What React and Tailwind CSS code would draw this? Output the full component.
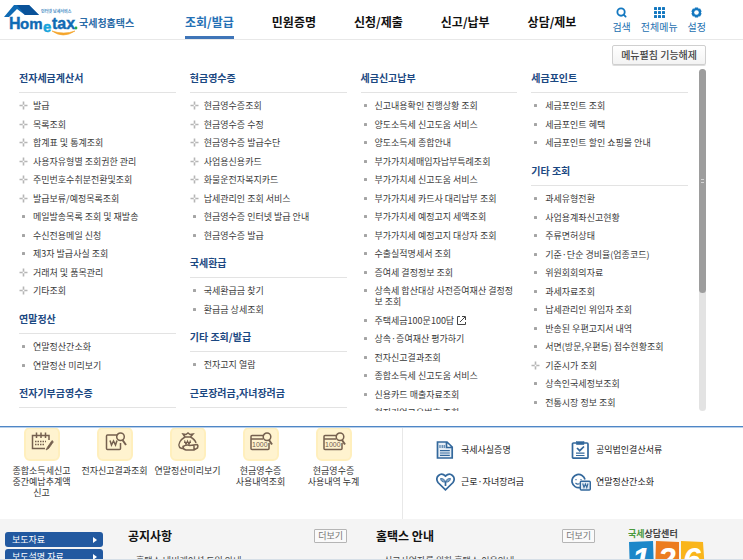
import { Search } from "lucide-react"

const NAV = ["조회/발급", "민원증명", "신청/제출", "신고/납부", "상담/제보"]

// items starting with "+" have a submenu
const COLUMNS = [
    [
        {
            title: "전자세금계산서",
            items: ["+발급", "+목록조회", "+합계표 및 통계조회", "+사용자유형별 조회권한 관리", "+주민번호수취분전환및조회", "+발급보류/예정목록조회", "메일발송목록 조회 및 재발송", "수신전용메일 신청", "제3자 발급사실 조회", "+거래처 및 품목관리", "+기타조회"],
        },
        { title: "연말정산", items: ["연말정산간소화", "연말정산 미리보기"] },
        { title: "전자기부금영수증", items: [] },
    ],
    [
        {
            title: "현금영수증",
            items: ["+현금영수증조회", "+현금영수증 수정", "+현금영수증 발급수단", "+사업용신용카드", "+화물운전자복지카드", "+납세관리인 조회 서비스", "현금영수증 인터넷 발급 안내", "현금영수증 발급"],
        },
        { title: "국세환급", items: ["국세환급금 찾기", "환급금 상세조회"] },
        { title: "기타 조회/발급", items: ["전자고지 열람"] },
        { title: "근로장려금,자녀장려금", items: [] },
    ],
    [
        {
            title: "세금신고납부",
            items: ["신고내용확인 진행상황 조회", "양도소득세 신고도움 서비스", "양도소득세 종합안내", "부가가치세매입자납부특례조회", "부가가치세 신고도움 서비스", "부가가치세 카드사 대리납부 조회", "부가가치세 예정고지 세액조회", "부가가치세 예정고지 대상자 조회", "수출실적명세서 조회", "증여세 결정정보 조회", "상속세 합산대상 사전증여재산 결정정보 조회", "주택세금100문100답", "상속·증여재산 평가하기", "전자신고결과조회", "종합소득세 신고도움 서비스", "신용카드 매출자료조회", "현지기업고유번호 조회"],
        },
    ],
    [
        { title: "세금포인트", items: ["세금포인트 조회", "세금포인트 혜택", "세금포인트 할인 쇼핑몰 안내"] },
        {
            title: "기타 조회",
            items: ["과세유형전환", "사업용계좌신고현황", "주류면허상태", "기준·단순 경비율(업종코드)", "위원회회의자료", "과세자료조회", "납세관리인 위임자 조회", "반송된 우편고지서 내역", "서면(방문,우편등) 접수현황조회", "+기준시가 조회", "상속인국세정보조회", "전통시장 정보 조회"],
        },
    ],
]

const QUICK = [
    { icon: "calendar", lines: ["종합소득세신고", "중간예납추계액", "신고"] },
    { icon: "result", lines: ["전자신고결과조회"] },
    { icon: "bag", lines: ["연말정산미리보기"] },
    { icon: "cash", lines: ["현금영수증", "사용내역조회"] },
    { icon: "cash", lines: ["현금영수증", "사용내역 누계"] },
]

const SERVICES = [
    { icon: "document", label: "국세사실증명" },
    { icon: "clipboard", label: "공익법인결산서류" },
    { icon: "heart", label: "근로·자녀장려금" },
    { icon: "face", label: "연말정산간소화" },
]

function Logo() {
    return (
        <svg width="131" height="34" viewBox="0 0 131 34" role="img" aria-label="Hometax 국세청홈택스" className="shrink-0">
            <path d="M0 13L10 1H25L35 11H21L13 5L5 13Z" fill="#0f6ab4" />
            <path d="M13 1H25L35 11H21Z" fill="#0a5299" />
            <g fontFamily="Liberation Sans, sans-serif" fontWeight="bold" fill="#0f6ab4" stroke="#0f6ab4" strokeWidth="0.4">
                <text x="5" y="25" fontSize="16">H</text>
                <text x="16" y="25" fontSize="15">om</text>
                <text x="39" y="28" fontSize="15" fill="#16a5dc" stroke="#16a5dc">e</text>
                <text x="48" y="25" fontSize="16">tax</text>
            </g>
            <path d="M48 27Q59 35 71 27Q60 31 48 27Z" fill="#f5a52a" stroke="#f5a52a" strokeWidth="0.6" />
            <circle cx="72" cy="24" r="1.4" fill="#2aa84a" />
            <g fontFamily="Noto Sans CJK KR, sans-serif" fontWeight="bold">
                <text x="37" y="9" fontSize="4" fill="#4d8fc6">인터넷 납세서비스</text>
                <text x="75" y="23" fontSize="10" fill="#2b6ca8">국세청홈택스</text>
            </g>
        </svg>
    )
}

function GridIcon() {
    return (
        <svg width="11" height="11" viewBox="0 0 11 11" fill="#1478c0" aria-hidden="true">
            {[0, 4, 8].map((y) => [0, 4, 8].map((x) => <rect key={`${x}-${y}`} x={x} y={y} width="3" height="3" rx="0.5" />))}
        </svg>
    )
}

function GearIcon() {
    return (
        <svg width="11" height="11" viewBox="0 0 11 11" aria-hidden="true">
            <path d="M4 0.5h3l0.6 1.2 1.5-0.1 1.5 2.6-0.7 1.3 0.7 1.3-1.5 2.6-1.5-0.1L7 10.5H4l-0.6-1.2-1.5 0.1L0.4 6.8l0.7-1.3-0.7-1.3 1.5-2.6 1.5 0.1z" fill="#1478c0" />
            <circle cx="5.5" cy="5.5" r="2.3" fill="#fff" />
        </svg>
    )
}

function Header() {
    return (
        <header className="flex justify-between border-b border-[#e8e8e8] pl-1 pr-[37px]">
            <div className="flex">
                <a href="#home" className="pt-1">
                    <Logo />
                </a>
                <nav className="ml-[50px] flex gap-[38px]">
                    {NAV.map((label, i) => (
                        <a
                            key={label}
                            href="#menu"
                            className={`h-[39px] whitespace-nowrap border-b-3 pt-[13px] text-[12px] leading-[18px] font-bold ${i === 0 ? "border-[#3f75b8] text-[#2470b5]" : "border-transparent text-[#111]"}`}
                        >
                            {label}
                        </a>
                    ))}
                </nav>
            </div>
            <div className="flex gap-[10px] whitespace-nowrap pt-[7px] text-[10px] leading-[14px] text-[#1d6fb0]">
                <button className="flex flex-col items-center gap-[2px]">
                    <Search size={11} strokeWidth={4} color="#1478c0" />
                    검색
                </button>
                <button className="flex flex-col items-center gap-[2px]">
                    <GridIcon />
                    전체메뉴
                </button>
                <button className="flex flex-col items-center gap-[2px]">
                    <GearIcon />
                    설정
                </button>
            </div>
        </header>
    )
}

function Marker({ plus }) {
    return (
        <svg width="9" height="9" viewBox="0 0 9 9" className="mt-px mr-[5px] shrink-0" aria-hidden="true">
            {plus ? (
                <g>
                    <path d="M0.5 4.5H8.5M4.5 0.5V8.5" stroke="#b5b5b5" strokeWidth="1.6" />
                    <rect x="3.7" y="3.7" width="1.6" height="1.6" fill="#fff" />
                </g>
            ) : (
                <rect x="3" y="3" width="3" height="3" rx="0.5" fill="#a5a5a5" />
            )}
        </svg>
    )
}

function NewWindowIcon() {
    return (
        <svg width="11" height="11" viewBox="0 0 11 11" fill="none" stroke="#444" className="ml-[2px]" aria-hidden="true">
            <path d="M4 1.5H1.5V9.5H9.5V7M4 7L9 2M6 1.5H9.5V5" />
        </svg>
    )
}

function MenuSection({ title, items }) {
    return (
        <section>
            <h2 className="border-b border-[#e3e3e3] pb-[6px] text-[10px] leading-4 font-bold text-[#1b4882]">{title}</h2>
            <ul className="pt-[3px]">
                {items.map((item) => (
                    <li key={item} className="pt-1 pb-1 text-[9px] leading-[11px] text-[#3a3a3a] even:pb-[3px]">
                        <a href="#item" className="flex">
                            <Marker plus={item.startsWith("+")} />
                            <span>{item.replace("+", "")}</span>
                            {item.startsWith("주택세금") && <NewWindowIcon />}
                        </a>
                    </li>
                ))}
            </ul>
        </section>
    )
}

function MegaMenu() {
    return (
        <div className="z-10 border-b border-[#4f86c6] bg-white pt-[5px] pr-[37px] pb-[15px] pl-[19px] shadow-[0_1px_0_#b9d0ea]">
            <div className="flex justify-end">
                <button className="h-5 rounded-[2px] border border-[#cfcfcf] bg-linear-to-b from-white to-[#f3f3f3] px-2 text-[10px] leading-4 font-medium text-[#444] shadow-[0_1px_0_#ddd]">
                    메뉴펼침 기능해제
                </button>
            </div>
            <div className="mt-1 flex h-[342px] gap-[11px] overflow-hidden">
                <div className="grid flex-1 grid-cols-4 gap-x-[14px] pt-px">
                    {COLUMNS.map((sections) => (
                        <div key={sections[0].title} className="flex flex-col gap-[11px]">
                            {sections.map((s) => (
                                <MenuSection key={s.title} {...s} />
                            ))}
                        </div>
                    ))}
                </div>
                <div className="w-[7px] rounded-full bg-[#e3e3e3]">
                    <div className="flex h-56 items-center justify-center rounded-full bg-[#9d9d9d]">
                        <span className="h-1 w-[3px] border-y border-[#d5d5d5]" />
                    </div>
                </div>
            </div>
        </div>
    )
}

function QuickIcon({ name }) {
    return (
        <svg width="24" height="20" viewBox="0 0 24 20" fill="none" stroke="#75604f" strokeWidth="1.5" aria-hidden="true">
            {name === "calendar" && (
                <g>
                    <path d="M19 8V3.5H2.5V16.5H15M6.5 0.5V6M11 0.5V6M15.5 0.5V6" />
                    <path d="M5 9.5H16M5 12.5H14" strokeDasharray="1.5 1" />
                    <path d="M22 8.5L17.5 15L16 18L18.8 16.4L23.4 9.8Z" fill="#75604f" strokeWidth="0.7" />
                </g>
            )}
            {name === "result" && (
                <g>
                    <path d="M14 3H4.5Q3.5 3 3.5 4V16.5Q3.5 17.5 4.5 17.5H16.5Q17.5 17.5 17.5 16.5V11" />
                    <circle cx="17.5" cy="4.8" r="3.8" fill="#fff3cf" />
                    <path d="M19.5 8L23 13" strokeWidth="2" />
                    <path d="M7 8.5L8.5 13L10.5 9L12.5 13L14 8.5" strokeWidth="1.5" />
                </g>
            )}
            {name === "bag" && (
                <g>
                    <path d="M9 5L7 2L10 2.5L12 1L14 2.5L17 2L14.5 5ZM9 5C4 8 2 12 3.5 15Q4 16.5 8 16.5M14.5 5C18 7 19.5 9 20 11" />
                    <path d="M8.5 8.5L10 12.5L11.5 9L13 12.5L14.5 8.5M8 10.5H15" strokeWidth="1.2" />
                    <path d="M7 14.5Q11 12 14 13.5L21 12.5Q22.5 13 21.5 16L18 18H10Q7 17.5 7 14.5ZM18 13V18" />
                </g>
            )}
            {name === "cash" && (
                <g>
                    <path d="M14 3.5H3Q2 3.5 2 4.5V16.5Q2 17.5 3 17.5H19Q20 17.5 20 16.5V11M2 7H14" />
                    <text x="3" y="15" fontSize="7" fontFamily="Liberation Sans, sans-serif" fill="#75604f" stroke="none">1000</text>
                    <circle cx="18" cy="4.8" r="3.8" fill="#fff3cf" />
                    <path d="M20 8L23 12.5" strokeWidth="2" />
                </g>
            )}
        </svg>
    )
}

function ServiceIcon({ name }) {
    return (
        <svg width="20" height="18" viewBox="0 0 20 18" fill="none" stroke="#33689c" strokeWidth="1.7" aria-hidden="true">
            {name === "document" && (
                <g>
                    <path d="M1.5 1H11L16.2 6V17H1.5ZM10.5 1.5V6.5H16" fill="#e6eef6" />
                    <path d="M4 4V7M6.2 4V7M8.2 4V7" strokeWidth="1" />
                    <path d="M4 9.7H13.8M4 12H13.8M4 14.3H13.8" strokeWidth="1.2" />
                </g>
            )}
            {name === "clipboard" && (
                <g>
                    <rect x="1.5" y="2" width="15.5" height="15.2" rx="1" />
                    <rect x="5.5" y="0.6" width="7.5" height="3" fill="#33689c" strokeWidth="0.5" />
                    <path d="M6 7L8.7 9.7L13 5.5" />
                    <path d="M5 12.2H13.5M5 14.5H13.5" strokeWidth="1.2" />
                </g>
            )}
            {name === "heart" && (
                <g>
                    <path d="M9.5 16.8L2 9.5C-1.5 4 4.5-1.5 9.5 3C14.5-1.5 20.5 4 17 9.5Z" />
                    <path d="M9.5 13V8.5" />
                    <path d="M9.3 9Q5 9.5 4.5 5.5Q8.5 5 9.3 9ZM9.7 9Q14 9.5 14.5 5.5Q10.5 5 9.7 9Z" fill="#7ba0c4" strokeWidth="0.8" />
                </g>
            )}
            {name === "face" && (
                <g>
                    <path d="M9 14.5A6.6 6.6 0 1 1 14 6.5" />
                    <path d="M5 6V7.2M10 6V7.2M4.5 10Q6.5 12 8.5 10.5" strokeWidth="1.1" />
                    <rect x="9.3" y="8.2" width="10" height="8.8" rx="1" fill="#dfe9f3" strokeWidth="1.4" />
                    <path d="M11.7 10.5L13 14.5L14.4 11L15.8 14.5L17 10.5" strokeWidth="1.1" />
                </g>
            )}
        </svg>
    )
}

function QuickMenu() {
    return (
        <div className="flex h-[92px] shrink-0">
            <ul className="flex flex-1 pl-[5px]">
                {QUICK.map(({ icon, lines }) => (
                    <li key={lines.join()} className="w-[73px]">
                        <a href="#quick" className="flex flex-col items-center text-center text-[9px] leading-[11px] whitespace-nowrap text-[#333]">
                            <span className="mb-1 flex h-[34px] w-9 items-center justify-center rounded-md border-2 border-[#ffefbd] bg-[#fff3cf] pb-1">
                                <QuickIcon name={icon} />
                            </span>
                            {lines.map((line) => (
                                <span key={line}>{line}</span>
                            ))}
                        </a>
                    </li>
                ))}
            </ul>
            <ul className="grid w-[341px] grid-cols-[135px_1fr] content-start gap-y-3 border-l border-[#e8e8e8] pt-[13px] pl-[33px]">
                {SERVICES.map(({ icon, label }) => (
                    <li key={label}>
                        <a href="#service" className="flex h-5 items-center gap-[5px] text-[9px] text-[#222]">
                            <ServiceIcon name={icon} />
                            {label}
                        </a>
                    </li>
                ))}
            </ul>
        </div>
    )
}

function Board({ title, post }) {
    return (
        <section className="w-[219px]">
            <div className="flex items-center justify-between">
                <h2 className="text-[12px] leading-[18px] font-bold text-[#111]">{title}</h2>
                <button className="h-[14px] rounded-[1px] border border-[#b5b5b5] bg-[#fafafa] px-[3px] text-[9px] leading-3 text-[#777]">더보기</button>
            </div>
            <a href="#post" className="mt-[10px] block pl-2 text-[9px] leading-[11px] text-[#444]">{post}</a>
        </section>
    )
}

function CallCenter() {
    return (
        <svg width="78" height="52" viewBox="0 0 78 52" role="img" aria-label="국세상담센터 126" className="shrink-0">
            <text x="0" y="10" fontSize="9" fontWeight="bold" fontFamily="Noto Sans CJK KR, sans-serif" fill="#444">
                <tspan fill="#4a9a3c">국세</tspan>상담센터
            </text>
            <path d="M1 15L25 14L26 46H2Z" fill="#1b87c9" />
            <path d="M28 14L51 15V46L27 45Z" fill="#ec7c20" />
            <path d="M53 14L75 15L77 45L53 46Z" fill="#f9b51c" />
            <g fontFamily="Liberation Sans, sans-serif" fontWeight="bold" fontStyle="italic" fontSize="32" fill="#fff">
                <text x="4" y="43">1</text>
                <text x="30" y="43">2</text>
                <text x="55" y="43">6</text>
            </g>
        </svg>
    )
}

function Bottom() {
    return (
        <div className="flex min-h-0 flex-1 overflow-hidden border-b border-[#d5dee6] bg-[#f4f4f4] pt-2 pl-[5px]">
            <ul className="mt-[5px] mr-[25px] flex w-[98px] shrink-0 flex-col gap-[2px]">
                {["보도자료", "보도설명 자료"].map((label) => (
                    <li key={label}>
                        <a href="#press" className="flex h-[15px] items-center justify-between rounded-[3px] bg-[#2259a0] pr-[6px] pl-[7px] text-[9px] leading-[15px] text-white">
                            {label}
                            <svg width="4" height="6" viewBox="0 0 4 6" fill="#fff" aria-hidden="true">
                                <path d="M0 0L4 3L0 6Z" />
                            </svg>
                        </a>
                    </li>
                ))}
            </ul>
            <div className="flex shrink-0 gap-[29px]">
                <Board title="공지사항" post="홈택스 네비게이션 도입 안내" />
                <Board title="홈택스 안내" post="신고사업자를 위한 홈택스 이용안내" />
            </div>
            <div className="ml-[33px]">
                <CallCenter />
            </div>
        </div>
    )
}

function App() {
    return (
        <div className="flex h-screen flex-col overflow-hidden bg-white font-['Noto_Sans_CJK_KR',sans-serif]">
            <Header />
            <MegaMenu />
            <QuickMenu />
            <Bottom />
        </div>
    )
}

export default App
